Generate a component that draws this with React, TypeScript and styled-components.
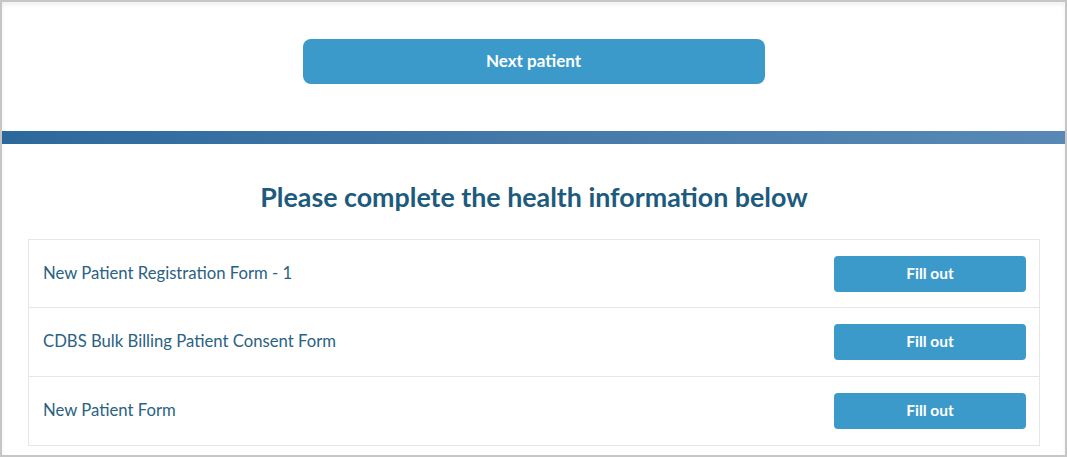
import React from "react";
import styled, { createGlobalStyle } from "styled-components";

const Global = createGlobalStyle`
  html, body { margin: 0; padding: 0; background: #fff; }
  body { font-family: Lato, "Noto Sans", "Liberation Sans", sans-serif; }
  * { box-sizing: border-box; }
`;

const Frame = styled.div`
  width: 1067px;
  height: 457px;
  border: 2px solid #c6c6c6;
  box-shadow: inset 0 3px 4px rgba(0, 0, 0, 0.06);
  display: flex;
  flex-direction: column;
  overflow: hidden;
`;

const TopSection = styled.div`
  height: 129px;
  display: flex;
  justify-content: center;
  padding-top: 37px;
`;

const PrimaryButton = styled.button`
  width: 462px;
  height: 45px;
  border: none;
  border-radius: 8px;
  background: #3b9aca;
  color: #fff;
  font-family: inherit;
  font-weight: 700;
  font-size: 17px;
  padding: 0 0 2px;
  cursor: pointer;
`;

const GradientBar = styled.div`
  height: 13px;
  background: linear-gradient(90deg, #2d689d 0%, #4479a8 50%, #5889b6 100%);
`;

const Content = styled.div`
  padding: 0 25px 0 26px;
  display: flex;
  flex-direction: column;
`;

const Heading = styled.h2`
  margin: 0;
  height: 95px;
  display: flex;
  align-items: center;
  justify-content: center;
  padding-top: 11px;
  font-size: 26.8px;
  font-weight: 700;
  color: #1c5b7d;
`;

const List = styled.div`
  border: 1px solid #e6e6e6;
`;

const Row = styled.div`
  height: 67px;
  display: flex;
  align-items: center;
  justify-content: space-between;
  padding: 0 13px 0 14px;
  & + & {
    height: 69px;
    border-top: 1px solid #e6e6e6;
  }
`;

const RowLabel = styled.span`
  font-size: 16.7px;
  color: #2a6283;
  margin-top: -2px;
`;

const FillButton = styled.button`
  width: 192px;
  height: 36px;
  border: none;
  border-radius: 4px;
  background: #3b9aca;
  color: #fff;
  font-family: inherit;
  font-weight: 700;
  font-size: 15.5px;
  padding: 0 0 2px;
  cursor: pointer;
`;

const forms = [
  "New Patient Registration Form - 1",
  "CDBS Bulk Billing Patient Consent Form",
  "New Patient Form",
];

export default function App() {
  return (
    <>
      <Global />
      <Frame>
        <TopSection>
          <PrimaryButton>Next patient</PrimaryButton>
        </TopSection>
        <GradientBar />
        <Content>
          <Heading>Please complete the health information below</Heading>
          <List>
            {forms.map((f) => (
              <Row key={f}>
                <RowLabel>{f}</RowLabel>
                <FillButton>Fill out</FillButton>
              </Row>
            ))}
          </List>
        </Content>
      </Frame>
    </>
  );
}
